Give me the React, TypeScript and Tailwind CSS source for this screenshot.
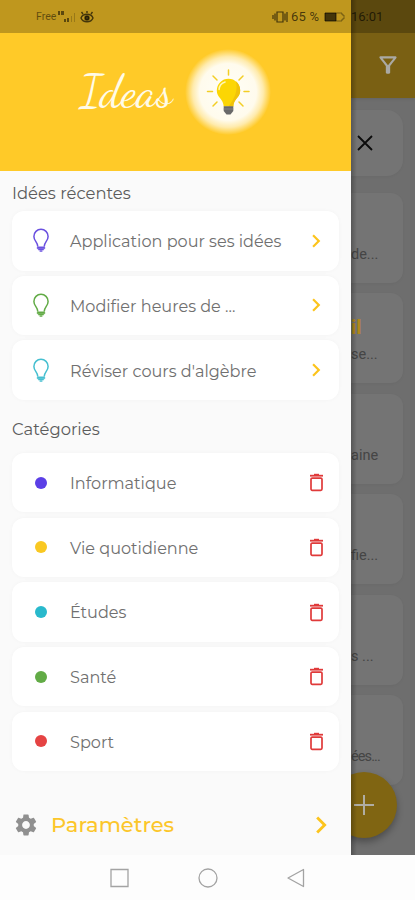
import type { ReactNode } from "react";
import { MdChevronRight, MdOutlineFilterAlt, MdSettings } from "react-icons/md";

interface Idea { label: string; color: string; }
interface Category { label: string; color: string; }
interface Note { title?: string; text: string; }

const ideas: Idea[] = [
  { label: "Application pour ses idées", color: "#6a50e0" },
  { label: "Modifier heures de ...",     color: "#62ab46" },
  { label: "Réviser cours d'algèbre",    color: "#45bfd0" },
];

const categories: Category[] = [
  { label: "Informatique",    color: "#5b3fe6" },
  { label: "Vie quotidienne", color: "#f9c822" },
  { label: "Études",          color: "#29b9cc" },
  { label: "Santé",           color: "#62ab46" },
  { label: "Sport",           color: "#e54343" },
];

// Notes peeking out behind the open drawer
const notes: Note[] = [
  { text: "de..." },
  { title: "il", text: "se..." },
  { text: "aine" },
  { text: "fie..." },
  { text: "s ..." },
  { text: "ées..." },
];

function BulbOutline({ color }: { color: string }) {
  return (
    <svg width="18" height="25" viewBox="0 0 18 25" fill="none" stroke={color} strokeWidth="1.5">
      <path d="M5.800 18.500C5.800 14.200 1.900 13 1.900 8.400a7.100 7.100 0 0 1 14.200 0c0 4.600-3.900 5.800-3.900 10.100" />
      <path d="M5.200 18.800h7.600v2H5.200z" fill={color} strokeWidth="0.500" />
      <path d="M6.200 21.600h5.600M7.600 23.200h2.800" strokeWidth="1.200" />
    </svg>
  );
}

function TrashOutline() {
  return (
    <svg className="mr-[5px]" width="15" height="19" viewBox="0 0 15 19" fill="none" stroke="#e03a3a">
      <path d="M1 2.700h13" strokeWidth="1.800" />
      <path d="M5 1.400h5" strokeWidth="1.200" />
      <rect x="2" y="5.100" width="11" height="12.200" rx="1.200" strokeWidth="1.700" />
    </svg>
  );
}

function GlowingBulb() {
  return (
    <svg width="86" height="86" viewBox="0 0 86 86">
      <defs>
        <radialGradient id="glow">
          <stop offset="0" stopColor="#fffef8" />
          <stop offset="0.66" stopColor="#fffbed" />
          <stop offset="0.82" stopColor="#ffebad" />
          <stop offset="1" stopColor="#ffca28" />
        </radialGradient>
      </defs>
      <circle cx="43" cy="43" r="43" fill="url(#glow)" />
      <g stroke="#f3ce24" strokeWidth="1.500" strokeLinecap="round">
        <path d="M43.500 21v5M28 27l4 4M58 27l-4 4M22.500 42.500h5M59 42.500h5M28 57l4-4M58 57l-4-4" />
      </g>
      <path d="M38.700 57.500C38.500 50 31.800 48.500 31.800 41.500a11.700 11.700 0 0 1 23.400 0c0 7-6.700 8.500-6.900 16z" fill="#fcd604" />
      <path d="M48.300 57.500c.2-7.500 6.900-9 6.900-16 0-4-1.700-7-4.300-9.200 2.300 9-1.200 17.200-7.400 25.200z" fill="#f0c20a" />
      <path d="M34.100 40.500c.2-3.800 2.600-6.500 6-7.500" stroke="#fff7b5" strokeWidth="1.500" fill="none" strokeLinecap="round" />
      <path d="M38.700 57.300h9.600v4.700L45.500 65.500h-4L38.700 62z" fill="#696969" />
      <path d="M38.700 60h9.600" stroke="#8a8a8a" strokeWidth="0.800" />
    </svg>
  );
}

function StatusBar() {
  return (
    <div className="absolute inset-x-0 top-0 flex h-[33px] items-center bg-black/25 pl-9 pr-[33px] font-['Roboto','Open_Sans',sans-serif] text-black/65">
      <span className="text-[10.500px] text-black/50">Free</span>
      <svg className="ml-px" width="21" height="14" viewBox="0 0 21 14" fill="currentColor">
        <path d="M1 1h2v4H1zM4 1h3v4H4zM7 9h2v3H7zM10 8h2v4h-2z" opacity=".8" />
        <path d="M14 6h1v6h-1zM17 3h1v9h-1z" opacity=".3" />
      </svg>
      <svg className="ml-0.5" width="14" height="12" viewBox="0 0 14 12" fill="none" stroke="currentColor" strokeWidth="1.400">
        <path d="M1 7c2-5 10-5 12 0-2 5-10 5-12 0zM3 3 1.500 1M7 2V0M11 3l1.500-2" />
        <circle cx="7" cy="7" r="2" fill="currentColor" />
      </svg>
      <svg className="ml-auto" width="16" height="12" viewBox="0 0 16 12" fill="none" stroke="currentColor" strokeWidth="1.200">
        <path d="M5 1h6v10H5zM3 2.500v7M13 2.500v7M1 4v4M15 1v10" />
      </svg>
      <span className="ml-[3px] w-[31px] whitespace-nowrap text-[13px] tracking-[0.200px]">65 %</span>
      <svg className="ml-0.5" width="22" height="10" viewBox="0 0 22 10" fill="none" stroke="currentColor">
        <path d="M1 1h11v8H1z" fill="currentColor" />
        <path d="M12 1h6v2h2v4h-2v2h-6" strokeOpacity=".6" />
      </svg>
      <span className="ml-[5px] w-[31px] text-[13px]">16:01</span>
    </div>
  );
}

function Row({ icon, label, action }: { icon: ReactNode; label: string; action: ReactNode }) {
  return (
    <li className="flex h-[59.500px] items-center rounded-xl bg-white pr-[10px] shadow-[0_0_4px_rgba(0,0,0,0.03)]">
      <span className="flex w-[58px] justify-center pr-px">{icon}</span>
      <span className="flex-1 whitespace-nowrap pt-px text-[16.100px] text-[#707070]">{label}</span>
      {action}
    </li>
  );
}

function Drawer() {
  return (
    <aside className="flex h-full w-[351px] shrink-0 flex-col bg-[#fafafa]">
      <header className="flex h-[171px] bg-[#ffca28] pl-[80px] pt-[49px]">
        <h1 className="w-[105px] pt-[14px] font-['Dancing_Script',cursive] text-[46px] leading-[58px] text-[#fffbe8]">
          Ideas
        </h1>
        <GlowingBulb />
      </header>

      <div className="px-3">
        <h2 className="mt-3 h-7 text-[16.400px] leading-[21px] text-[#5c5c5c]">Idées récentes</h2>
        <ul className="flex flex-col gap-[5.200px]">
          {ideas.map((idea) => (
            <Row
              key={idea.label}
              icon={<BulbOutline color={idea.color} />}
              label={idea.label}
              action={<MdChevronRight size={26} color="#fcc41c" />}
            />
          ))}
        </ul>

        <h2 className="mt-[19px] h-[34px] text-[16.400px] leading-[21px] text-[#5c5c5c]">Catégories</h2>
        <ul className="flex flex-col gap-[5.200px]">
          {categories.map((cat) => (
            <Row
              key={cat.label}
              icon={<span className="size-3 rounded-full" style={{ background: cat.color }} />}
              label={cat.label}
              action={<TrashOutline />}
            />
          ))}
        </ul>
      </div>

      <button className="mt-auto flex h-[60px] w-full items-center pl-[13px] pr-[13px] text-left">
        <MdSettings size={26} color="#909090" />
        <span className="ml-3 flex-1 text-[21px] font-medium text-[#fcc62a]">Paramètres</span>
        <MdChevronRight size={34} color="#fcc41c" />
      </button>
    </aside>
  );
}

function Backdrop() {
  return (
    <main className="relative flex-1 overflow-hidden bg-[#6e6e6e] font-['Roboto','Open_Sans',sans-serif]">
      <div className="flex h-[98px] justify-end bg-[#7a6013] pr-[14px] pt-[52px] shadow-[0_1px_3px_rgba(0,0,0,0.1)]">
        <MdOutlineFilterAlt size={26} color="#aaa9a4" />
      </div>

      <div className="mr-3 mt-3 flex h-[66px] items-center rounded-r-2xl bg-[#747474] pl-1.5 shadow-[0_1px_3px_rgba(0,0,0,0.04)]">
        <svg width="16" height="16" viewBox="0 0 16 16" stroke="#0c0c0c" strokeWidth="1.800">
          <path d="M1 1l14 14M15 1L1 15" />
        </svg>
      </div>

      <ul className="mr-3 mt-[17px] flex flex-col gap-[10.400px]">
        {notes.map((note) => (
          <li key={note.text} className="flex h-[90px] flex-col justify-end whitespace-nowrap rounded-r-xl bg-[#747474] pb-[18px] shadow-[0_1px_3px_rgba(0,0,0,0.04)] last:tracking-[-0.900px]">
            {note.title && <b className="mb-0.5 text-[20px] leading-8 text-[#b08818]">{note.title}</b>}
            <span className="text-[14.500px] leading-5 text-[#454545]">{note.text}</span>
          </li>
        ))}
      </ul>

      {/* Floating add button, half hidden by the drawer */}
      <button className="absolute -left-5 top-[772px] flex size-[66px] items-center justify-center rounded-full bg-[#806512] shadow-[0_4px_7px_rgba(0,0,0,0.3)]">
        <svg width="20" height="20" viewBox="0 0 20 20" stroke="#b0ada3" strokeWidth="2">
          <path d="M10 0v20M0 10h20" />
        </svg>
      </button>

      {/* Drawer edge shadow */}
      <div className="absolute inset-y-0 left-0 w-1.5 bg-linear-to-r from-black/25 to-transparent" />
    </main>
  );
}

export default function App() {
  return (
    <div className="relative flex h-[900px] w-[415px] flex-col overflow-hidden bg-[#fdfdfd] font-['Montserrat','Inter',sans-serif]">
      <div className="flex h-[855px]">
        <Drawer />
        <Backdrop />
      </div>

      <nav className="flex flex-1 items-center pl-[110px]">
        <svg width="197" height="20" viewBox="0 0 197 20" fill="none" stroke="#a3a3a3" strokeWidth="1.300">
          <path d="M1 1.500h17v17H1z" />
          <circle cx="98" cy="10" r="9" />
          <path d="M178 10 193.500 1.500v17z" strokeLinejoin="round" />
        </svg>
      </nav>

      <StatusBar />
    </div>
  );
}
